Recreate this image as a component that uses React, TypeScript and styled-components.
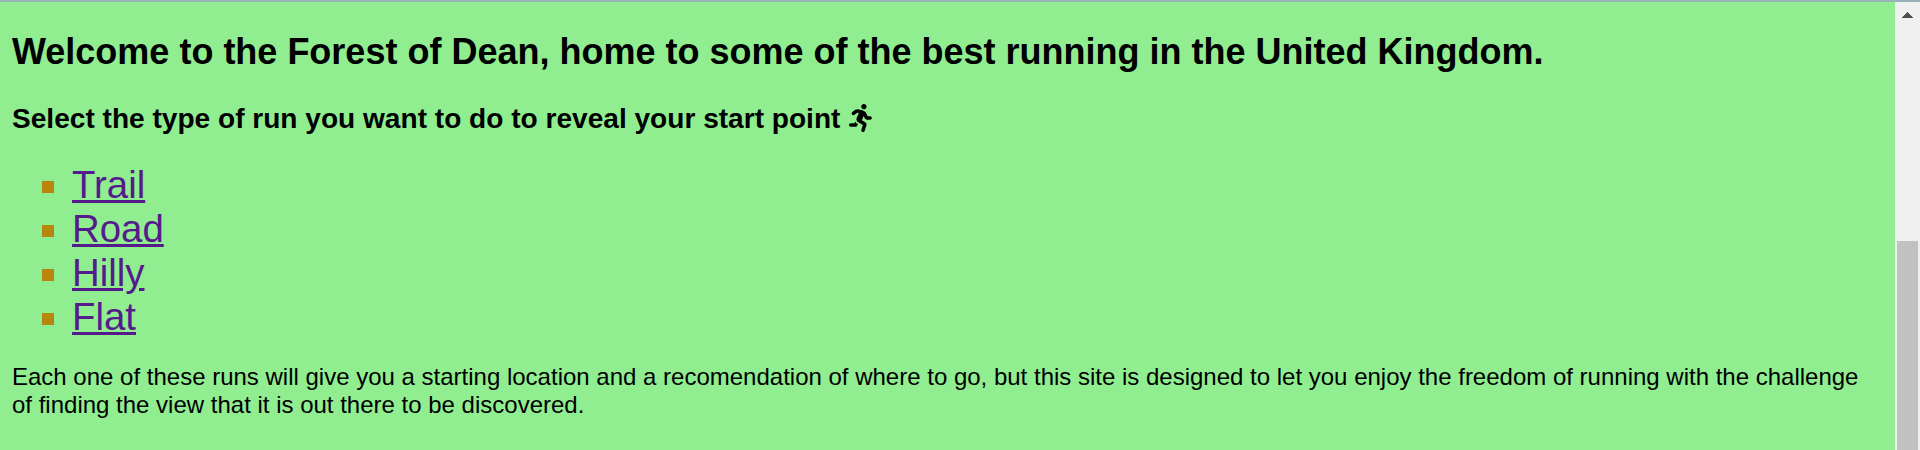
import React from 'react';
import styled, { createGlobalStyle } from 'styled-components';
import { FaRunning } from 'react-icons/fa';

const GlobalStyle = createGlobalStyle`
  * { box-sizing: border-box; }
  body { margin: 0; overflow: hidden; font-family: "Liberation Sans", Arial, sans-serif; }
`;
const Page = styled.div`
  display: flex; height: 450px; border-top: 2px solid #98b2b8; background: lightgreen; color: #000;
`;
const Content = styled.main`
  flex: 1; padding: 0 12px; min-width: 0;
`;
const Title = styled.h1`
  margin: 29px 0 0; font-size: 36px; line-height: 41px; white-space: nowrap;
`;
const Subtitle = styled.h2`
  margin: 31px 0 0; height: 32px; font-size: 28.08px; line-height: 32px; white-space: nowrap;
`;
const RunnerIcon = styled(FaRunning)`
  width: 0.8125em; height: 1em; margin-left: 1px; vertical-align: -4px;
`;
const RunList = styled.ul`
  margin: 28px 0 0; padding: 0;
`;
const RunItem = styled.li`
  display: flex; align-items: center; height: 44px; padding-left: 30px; font-size: 38.4px; line-height: 44px;
  &::before { content: ''; width: 12px; height: 12px; margin: 4px 18px 0 0; background: darkgoldenrod; }
`;
const RunLink = styled.a`
  color: #551a8b; text-decoration: underline;
`;
const Note = styled.p`
  margin: 24px 0 0; font-size: 24px; line-height: 28px;
`;
const Scrollbar = styled.div`
  display: flex; flex-direction: column; align-items: center; width: 25px; background: #f0f0f0;
`;
const Arrow = styled.svg`
  margin-top: 10px;
`;
const Thumb = styled.div`
  width: 21px; flex: 1; margin-top: 223px; background: #c1c1c1;
`;

export default function App() {
  return (
    <>
      <GlobalStyle />
      <Page>
        <Content>
          <Title>Welcome to the Forest of Dean, home to some of the best running in the United Kingdom.</Title>
          <Subtitle>Select the type of run you want to do to reveal your start point <RunnerIcon /></Subtitle>
          <RunList>
            {['Trail', 'Road', 'Hilly', 'Flat'].map((run) => (
              <RunItem key={run}><RunLink href="#">{run}</RunLink></RunItem>
            ))}
          </RunList>
          <Note>
            Each one of these runs will give you a starting location and a recomendation of where to go, but this site is designed to let you enjoy the freedom of running with the challenge of finding the view that it is out there to be discovered.
          </Note>
        </Content>
        <Scrollbar>
          <Arrow width="11" height="6" viewBox="0 0 11 6" shapeRendering="crispEdges">
            <path d="M5 0h1v1h1v1h1v1h1v1h1v1h1v1H0V5h1V4h1V3h1V2h1V1h1z" fill="#505050" />
          </Arrow>
          <Thumb />
        </Scrollbar>
      </Page>
    </>
  );
}
